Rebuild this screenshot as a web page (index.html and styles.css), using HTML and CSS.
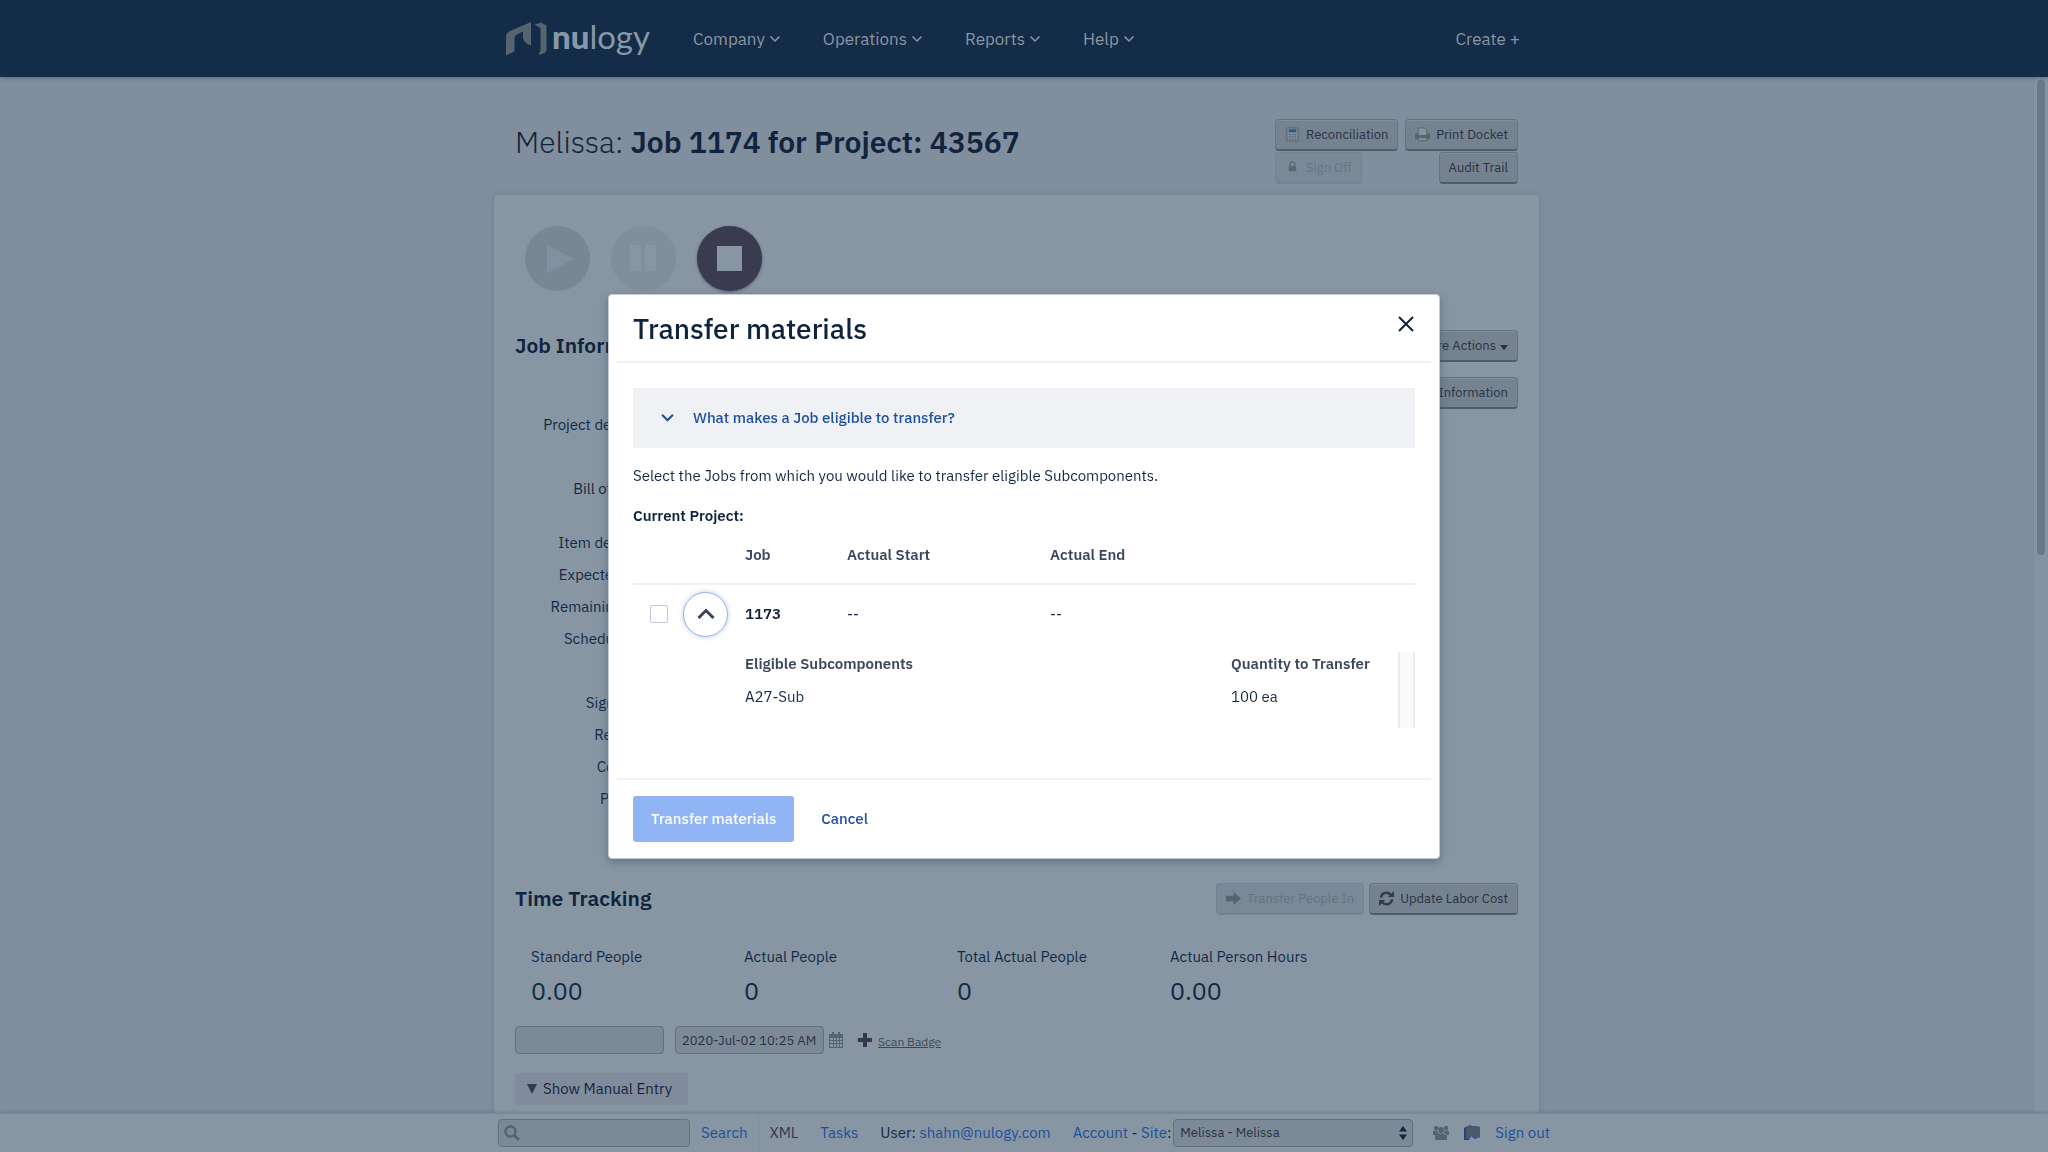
FILE: index.html
```html
<!DOCTYPE html>
<html lang="en">
<head>
<meta charset="utf-8">
<meta name="viewport" content="width=device-width, initial-scale=1">
<title>Job 1174 for Project: 43567</title>
<link rel="stylesheet" href="styles.css">
</head>
<body>
<svg class="sprite" aria-hidden="true">
  <symbol id="chevron" viewBox="0 0 12 12"><path d="M1.500 3.500L6 8l4.500-4.500" fill="none" stroke="currentColor" stroke-width="1.500"/></symbol>
</svg>
<div class="app">
  <header class="topbar">
    <div class="topbar-inner">
      <a class="logo" href="#" aria-label="nulogy">
        <svg class="logo-mark" viewBox="0 0 41 34"><path d="M0 33.500V15Q0 11 4 9L25 0v23.500q-6-1.500-8-7V9.500L10 13q-1.500 1-1.500 3v13.500L0 33.500z"/><path d="M28.500 2.500L35 .5l5.500 3V28q0 2-2 3l-5.500 2v-2.500l1.500-1.500V6z"/></svg>
        <span class="logo-text"><b>nu</b>logy</span>
      </a>
      <nav class="nav">
        <a href="#">Company <svg class="chev"><use href="#chevron"/></svg></a>
        <a href="#">Operations <svg class="chev"><use href="#chevron"/></svg></a>
        <a href="#">Reports <svg class="chev"><use href="#chevron"/></svg></a>
        <a href="#">Help <svg class="chev"><use href="#chevron"/></svg></a>
      </nav>
      <a class="create" href="#">Create +</a>
    </div>
  </header>

  <div class="viewport">
    <main class="main">
      <div class="column">
        <div class="title-row">
          <h1>Melissa: <b>Job 1174 for Project: 43567</b></h1>
          <div class="title-actions">
            <div class="action-row">
              <button class="btn" type="button"><svg class="ico" viewBox="0 0 16 16"><path d="M2 1h12v14H2z" fill="#7d8c9b" stroke="#56646f"/><path d="M4 2.500h8v3H4z" fill="#2656a0"/><path d="M4 8h2M7 8h2M10 8h2M4 10.500h2M7 10.500h2M10 10.500h2M4 13h2M7 13h2M10 13h2" stroke="#56646f"/></svg>Reconciliation</button>
              <button class="btn" type="button"><svg class="ico" viewBox="0 0 16 16"><path d="M0 8q0-1 1-1h14q1 0 1 1v5H0z" fill="#56646f"/><path d="M3.500 9V1h6.500l2.500 2.500V9z" fill="#8896a3" stroke="#56646f"/><path d="M3.500 11.500h9v3h-9z" fill="#8896a3" stroke="#56646f"/></svg>Print Docket</button>
            </div>
            <div class="action-row">
              <button class="btn" type="button" disabled><svg class="ico" viewBox="0 0 16 16"><path d="M5.500 7V4.500a2.500 2.500 0 0 1 5 0V7" fill="none" stroke="#5b6974" stroke-width="1.500"/><path d="M4 6.500h8V12H4z" fill="#5b6974"/></svg>Sign Off</button>
              <button class="btn plain" type="button">Audit Trail</button>
            </div>
          </div>
        </div>

        <section class="card">
          <div class="controls">
            <button class="round play" type="button" disabled aria-label="Start"><svg viewBox="0 0 65 65"><path d="M22 19l27 14-27 14z"/></svg></button>
            <button class="round pause" type="button" disabled aria-label="Pause"><svg viewBox="0 0 65 65"><path d="M19 19h11v26H19zM34 19h11v26H34z"/></svg></button>
            <button class="round stop" type="button" aria-label="Stop"><svg viewBox="0 0 65 65"><path d="M20 20h25v25H20z"/></svg></button>
          </div>
          <div class="section-head">
            <h2>Job Information</h2>
            <button class="btn plain" type="button">More Actions <span class="caret"></span></button>
          </div>
          <div class="section-sub"><button class="btn plain" type="button">Edit Job Information</button></div>
          <dl class="info">
            <dt class="space-lg">Project description</dt>
            <dt class="space-md">Bill of Material</dt>
            <dt>Item description</dt>
            <dt>Expected output</dt>
            <dt>Remaining output</dt>
            <dt class="space-lg">Scheduled start</dt>
            <dt>Signed off at</dt>
            <dt>References</dt>
            <dt>Comments</dt>
            <dt>Processed</dt>
          </dl>

          <div class="section-head">
            <h2>Time Tracking</h2>
            <div class="action-row">
              <button class="btn" type="button" disabled><svg class="ico" viewBox="0 0 16 16"><path d="M0 5h8V1l8 7-8 7v-4H0z" fill="#56646f"/></svg>Transfer People In</button>
              <button class="btn" type="button"><svg class="ico" viewBox="0 0 16 16"><path d="M2 7a6 6 0 0 1 10.500-3M14 9a6 6 0 0 1-10.500 3" fill="none" stroke="#36384e" stroke-width="2.500"/><path d="M16 0v6.500H9.500zM0 16V9.500h6.500z" fill="#36384e"/></svg>Update Labor Cost</button>
            </div>
          </div>
          <dl class="stats">
            <div><dt>Standard People</dt><dd>0.00</dd></div>
            <div><dt>Actual People</dt><dd>0</dd></div>
            <div><dt>Total Actual People</dt><dd>0</dd></div>
            <div><dt>Actual Person Hours</dt><dd>0.00</dd></div>
          </dl>
          <div class="badge-row">
            <input class="field" type="text" aria-label="Badge">
            <input class="field" type="text" aria-label="Time" value="2020-Jul-02 10:25 AM">
            <svg class="calendar" viewBox="0 0 14 16"><path d="M0 2h14v14H0z" fill="#56646f"/><path d="M3 0h2v3H3zM9 0h2v3H9z" fill="#56646f"/><path d="M1 6h3v2H1zM5 6h2v2H5zM8 6h2v2H8zM11 6h2v2h-2zM1 9h3v2H1zM5 9h2v2H5zM8 9h2v2H8zM11 9h2v2h-2zM1 12h3v3H1zM5 12h2v3H5zM8 12h2v3H8zM11 12h2v3h-2z" fill="#8896a3"/></svg>
            <svg class="plus" viewBox="0 0 14 14"><path d="M5 0h4v5h5v4H9v5H5V9H0V5h5z" fill="#36384e"/></svg>
            <a class="scan" href="#">Scan Badge</a>
          </div>
          <button class="manual" type="button"><span class="tri"></span>Show Manual Entry</button>
        </section>
      </div>
    </main>
    <div class="scrollbar"><div class="thumb"></div></div>
  </div>

  <footer class="bottombar">
    <div class="bottom-inner">
      <div class="search-box">
        <svg class="mag" viewBox="0 0 16 16"><circle cx="6.500" cy="6.500" r="5" fill="none" stroke="#56646f" stroke-width="2.500"/><path d="M10 10l5 5" stroke="#56646f" stroke-width="3"/></svg>
        <input class="field search" type="text" aria-label="Search">
      </div>
      <a class="search-link" href="#">Search</a>
      <div class="links">
        <span class="xml">XML</span>
        <a href="#">Tasks</a>
        <span>User: <a href="#">shahn@nulogy.com</a></span>
        <span class="site"><span><a href="#">Account</a> - <label for="site">Site</label>:</span>
          <span class="select-wrap"><select id="site" class="field"><option>Melissa - Melissa</option></select>
          <svg class="updown" viewBox="0 0 8 14"><path d="M0 5.500L4 0l4 5.500zM0 8.500L4 14l4-5.500z" fill="#15243c"/></svg></span>
        </span>
      </div>
      <div class="tail">
        <svg class="tail-ico" viewBox="0 0 16 16"><g fill="#56646f"><circle cx="3" cy="3" r="2.200"/><circle cx="13" cy="3" r="2.200"/><circle cx="8" cy="5" r="3"/><path d="M0 10V7q0-1.500 1-1.500h3q1 2.500 2 3L3.500 10zM16 10V7q0-1.500-1-1.500h-3q-1 2.500-2 3l2.500 1.500zM2 14v-3q0-2.500 3-2.500h6q3 0 3 2.500v3q0 1-1 1H3q-1 0-1-1z"/></g></svg>
        <svg class="tail-ico" viewBox="0 0 16 16"><path d="M0 4q0-2 2-2l4-2q3 2 4 1l6 1v10l-5 2-4-3-2 4H0z" fill="#1f4580"/><path d="M2 3q2-2.500 5-2 2 1.500 4 .5t5 1v9q-4 3-7 .5T4 14H2z" fill="#4c5b69"/><path d="M5 8l1 3-1 2zM10 12l4 0-2 2z" fill="#2860bd"/></svg>
        <a href="#">Sign out</a>
      </div>
    </div>
  </footer>
</div>

<div class="overlay">
  <div class="modal" role="dialog" aria-modal="true" aria-labelledby="modal-title">
    <div class="modal-head">
      <h2 id="modal-title">Transfer materials</h2>
      <button class="close" type="button" aria-label="Close"><svg viewBox="0 0 16 16"><path d="M1 1l14 14M15 1L1 15" stroke="#0f233c" stroke-width="2"/></svg></button>
    </div>
    <div class="modal-body">
      <button class="accordion" type="button"><svg viewBox="0 0 12 12"><path d="M1 3.500L6 8.500l5-5" fill="none" stroke="currentColor" stroke-width="2"/></svg>What makes a Job eligible to transfer?</button>
      <p>Select the Jobs from which you would like to transfer eligible Subcomponents.</p>
      <p class="strong">Current Project:</p>
      <table class="jobs">
        <thead><tr><th class="c-check"></th><th class="c-expand"></th><th class="c-job">Job</th><th class="c-start">Actual Start</th><th>Actual End</th></tr></thead>
        <tbody>
          <tr>
            <td class="c-check"><input type="checkbox" aria-label="Select job 1173"></td>
            <td class="c-expand"><button class="expander" type="button" aria-label="Collapse job 1173"><svg viewBox="0 0 18 12"><path d="M1.500 10L9 2.500l7.500 7.500" fill="none" stroke="#384457" stroke-width="3"/></svg></button></td>
            <td class="strong">1173</td><td>--</td><td>--</td>
          </tr>
        </tbody>
      </table>
      <div class="details">
        <table class="subs">
          <thead><tr><th class="c-sub">Eligible Subcomponents</th><th>Quantity to Transfer</th></tr></thead>
          <tbody><tr><td>A27-Sub</td><td>100 ea</td></tr></tbody>
        </table>
        <div class="track"></div>
      </div>
    </div>
    <div class="modal-foot">
      <button class="primary" type="button" disabled>Transfer materials</button>
      <button class="cancel" type="button">Cancel</button>
    </div>
  </div>
</div>
</body>
</html>
```
FILE: styles.css
```css
* { box-sizing: border-box; }
body {
  margin: 0;
  font: 15px/24px "IBM Plex Sans", Roboto, sans-serif;
  color: #142a44;
  background: #818e9e;
}
h1, h2, p, dl, dd { margin: 0; }
button, input, select { font: inherit; color: inherit; }
button { padding: 0; border: 0; background: none; white-space: nowrap; }
a { color: #1d4f9c; text-decoration: none; }
svg { display: block; flex: none; }
.sprite { position: absolute; width: 0; height: 0; }

.app { display: flex; flex-direction: column; height: 100vh; overflow: hidden; }

/* top navigation */
.topbar { flex: none; height: 77px; background: #132c48; box-shadow: 0 1px 4px rgba(20, 40, 70, .35); z-index: 1; }
.topbar-inner { display: flex; align-items: center; max-width: 1052px; height: 100%; margin: 0 auto; padding: 0 30px 0 8px; font-size: 17px; }
.topbar a { color: #8b95a1; }
.logo { display: flex; align-items: center; gap: 5px; width: 187px; }
.logo-mark { width: 41px; height: 34px; fill: #56646f; }
.logo-text { padding-bottom: 5px; font: 400 33px/40px Lato, sans-serif; color: #8798a8; }
.logo-text b { font-weight: 900; }
.nav { display: flex; gap: 42px; flex: 1; }
.nav a { display: flex; align-items: center; gap: 4px; }
.chev { width: 12px; height: 12px; }

.viewport { display: flex; flex: 1; min-height: 0; overflow: hidden; }
.main { flex: 1; min-width: 0; }
.column { max-width: 1045px; margin: 0 auto; }
.scrollbar { flex: none; width: 15px; padding: 3px 3px 0; background: #8493a1; border-left: 1px solid #78879a; }
.thumb { height: 46%; border-radius: 5px; background: #6a7888; }

.title-row { display: flex; justify-content: space-between; padding: 42px 21px 11px; }
h1 { font-size: 30px; line-height: 46px; font-weight: 300; color: #11243d; }
h1 b { font-weight: 600; }
.title-actions { display: grid; gap: 1px; width: 243px; }
.action-row { display: flex; justify-content: space-between; gap: 5px; }

.btn {
  display: flex; align-items: center; gap: 6px; height: 32px; padding: 0 9px;
  font-size: 13px; line-height: 16px; color: #2c3045;
  background: #74838f; border: 1px solid #667480; border-bottom: 2px solid #505d69; border-radius: 4px;
  box-shadow: inset 0 1px 0 #808f9b;
}
.btn:disabled { color: #66747f; background: #7a8998; border-color: #74838f; box-shadow: none; }
.btn.plain { gap: 4px; }
.ico { width: 15px; height: 15px; }
.caret { margin-top: 3px; border: 4px solid transparent; border-top: 5px solid #2c3045; border-bottom: 0; }

.card { min-height: 960px; padding: 31px 21px; background: #8896a3; border-radius: 4px; box-shadow: 0 0 6px rgba(60, 80, 105, .25); }
.controls { display: flex; gap: 21px; padding-left: 10px; margin-bottom: 39px; }
.round { width: 65px; height: 65px; border-radius: 50%; }
.play { background: #788793; fill: #8291a0; }
.pause { background: #808f9b; fill: #8896a3; }
.stop { background: #3b3b50; fill: #8896a3; box-shadow: 0 1px 3px rgba(30, 40, 60, .5); }

.section-head { display: flex; justify-content: space-between; align-items: center; height: 32px; }
.section-head h2 { padding-bottom: 2px; font-size: 21px; font-weight: 600; color: #11243d; }
.section-sub { display: flex; justify-content: flex-end; margin-top: 15px; }
.info { width: 155px; margin-bottom: 68px; text-align: right; line-height: 32px; }
.info dt { white-space: nowrap; }
.info .space-lg { margin-bottom: 32px; }
.info .space-md { margin-bottom: 22px; }

.stats { display: grid; grid-template-columns: repeat(4, 213px); padding: 30px 0 19px 16px; }
.stats dd { margin-top: 6px; font-size: 25px; line-height: 32px; }

.field { height: 28px; border: 1px solid #64727f; border-radius: 4px; background: #7c8a98; font-size: 13px; color: #2c3045; }
.badge-row { display: flex; align-items: center; margin-bottom: 19px; }
.badge-row .field { width: 149px; margin-right: 11px; padding: 0 6px; }
.badge-row .field + .field { margin-right: 5px; }
.calendar { width: 14px; height: 16px; }
.plus { width: 14px; height: 14px; margin: 0 6px 0 15px; }
.scan { padding-top: 3px; font-size: 12px; color: #3b4a5a; text-decoration: underline; }
.manual { display: flex; align-items: center; gap: 6px; height: 32px; padding: 0 16px 0 12px; background: #808c9c; border-radius: 3px; color: #15243c; }
.tri { border: 5px solid transparent; border-top: 10px solid #36384e; border-bottom: 0; }

/* bottom toolbar */
.bottombar { flex: none; height: 39px; background: #8896a3; border-top: 1px solid #7b8997; box-shadow: 0 -1px 3px rgba(60, 80, 105, .3); z-index: 1; }
.bottom-inner { display: flex; align-items: center; max-width: 1052px; height: 100%; margin: 0 auto; white-space: nowrap; }
.search-box { position: relative; }
.search { display: block; width: 192px; padding-left: 28px; }
.mag { position: absolute; left: 6px; top: 6px; width: 16px; height: 16px; }
.search-link { margin: 0 11px 0 11px; }
.links { display: flex; align-items: center; gap: 22px; height: 100%; padding-left: 10px; border-left: 1px solid #7f8d9b; }
.xml { color: #36384e; }
.site { display: flex; align-items: center; gap: 2px; }
.site label { color: #1d4f9c; }
.select-wrap { position: relative; }
select.field { display: block; width: 240px; padding: 0 6px; appearance: none; }
.updown { position: absolute; right: 6px; top: 7px; width: 8px; height: 14px; }
.tail { display: flex; align-items: center; gap: 15px; margin-left: auto; }
.tail-ico { width: 16px; height: 16px; }

/* dialog */
.overlay { position: fixed; inset: 0; z-index: 2; display: flex; align-items: center; justify-content: center; }
.modal { width: 832px; max-width: 100%; background: #fff; border: 1px solid #c3ccd6; border-radius: 4px; box-shadow: 0 3px 8px rgba(50, 70, 95, .45); }
.modal-head { display: flex; justify-content: space-between; align-items: center; height: 68px; margin: 0 8px; padding: 0 17px 0 16px; border-bottom: 2px solid #f0f1f6; }
.modal-head h2 { padding-top: 2px; font-size: 28px; line-height: 36px; font-weight: 500; color: #0f233c; }
.close { width: 16px; height: 16px; margin-bottom: 8px; }
.modal-body { padding: 25px 24px 50px; }
.accordion { display: flex; align-items: center; gap: 19px; width: 100%; height: 60px; padding-left: 28px; background: #f0f1f5; color: #2050a0; font-weight: 500; }
.accordion svg { width: 13px; height: 13px; }
.modal-body p { margin-top: 16px; }
.strong { font-weight: 600; color: #0f233c; }
table { border-collapse: collapse; width: 100%; table-layout: fixed; }
th, td { padding: 0; text-align: left; }
th { font-weight: 600; color: #3b485b; }
.jobs th { height: 56px; }
.jobs thead { border-bottom: 2px solid #f0f1f6; }
.jobs td { height: 60px; }
.jobs .c-check { width: 50px; }
.jobs .c-expand { width: 62px; }
.c-job { width: 102px; }
.c-start { width: 203px; }
td.c-check { padding-left: 17px; }
.c-check input { display: block; appearance: none; width: 18px; height: 18px; margin: 0; border: 1px solid #c0c9d8; border-radius: 2px; background: #fff; }
.expander { display: grid; place-items: center; width: 45px; height: 45px; border: 1px solid #8fb0e8; border-radius: 50%; box-shadow: 0 0 4px 1px #d5dbe6; }
.expander svg { width: 18px; height: 12px; }
.details { display: flex; height: 76px; margin-top: 8px; padding-left: 112px; }
.subs { flex: 1; height: 62px; }
.subs th { height: 20px; }
.subs td { height: 42px; }
.c-sub { width: 486px; }
.track { flex: none; width: 17px; background: #fafafb; border: solid #ebebee; border-width: 0 2px; }
.modal-foot { display: flex; align-items: center; gap: 27px; height: 80px; margin: 0 8px; padding: 0 16px; border-top: 2px solid #f0f1f6; font-weight: 500; }
.primary { height: 46px; padding: 0 18px; background: #91b4f4; color: #fff; border-radius: 3px; }
.cancel { color: #2050a0; }
```
